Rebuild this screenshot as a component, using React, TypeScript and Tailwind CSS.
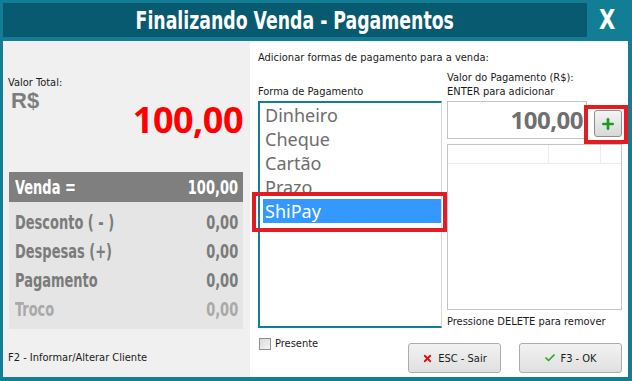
import { Check, Plus, X } from "lucide-react";

const cond = "font-['DejaVu_Sans_Condensed',sans-serif] font-bold";
const ui = "font-['DejaVu_Sans_Condensed',Tahoma,sans-serif] text-[11px] leading-[13px]";

const formas = ["Dinheiro", "Cheque", "Cartão", "Prazo", "ShiPay"];

const resumo = [
  { label: "Desconto ( - )", value: "0,00", tone: "text-[#7b7b7b]" },
  { label: "Despesas (+)", value: "0,00", tone: "text-[#7b7b7b]" },
  { label: "Pagamento", value: "0,00", tone: "text-[#7b7b7b]" },
  { label: "Troco", value: "0,00", tone: "text-[#a9a9a9]" }
];

function SummaryRow({ label, value, tone }: { label: string; value: string; tone: string }) {
  return (
    <div className={`flex h-[29px] items-center justify-between pl-[6px] pr-[5px] text-[19px] leading-[29px] ${tone} ${cond}`}>
      <span className="inline-block origin-left scale-x-[0.76]">{label}</span>
      <span className="inline-block origin-right scale-x-[0.76]">{value}</span>
    </div>
  );
}

export default function App() {
  return (
    <div className="relative flex h-[381px] w-[632px] flex-col bg-[#127e96] pb-[4px] pl-[3px] pr-[4px] pt-[3px]">
      {/* title */}
      <div className="flex h-[38px] items-start">
        <div className="flex h-[34px] w-[584px] items-center justify-center bg-[#075a70]">
          <span className={`inline-block scale-x-[0.77] text-[25px] leading-none text-white ${cond}`}>
            Finalizando Venda - Pagamentos
          </span>
        </div>
        <div className="flex h-[34px] flex-1 items-center justify-center">
          <span className={`inline-block scale-x-[0.9] text-[26px] leading-none text-white ${cond}`}>X</span>
        </div>
      </div>

      <div className="flex h-[336px]">
        {/* left panel */}
        <div className="flex w-[247px] flex-col bg-[#f0f0f0]">
          <div className={`ml-[5px] mt-[35px] text-[#1a1a1a] ${ui}`}>Valor Total:</div>
          <div className="ml-[8px] mt-[3px] font-['Liberation_Sans',Arial,sans-serif] text-[22px] font-bold leading-[18px] text-[#7d7d7d]">
            R$
          </div>
          <div className="-mt-[2px] pr-[7px] text-right font-['Open_Sans',sans-serif] text-[36px] font-bold leading-[24px] tracking-[-0.5px] text-[#ff0000]">
            100,00
          </div>
          <div className="ml-[6px] mt-[40px] w-[234px] bg-[#e5e5e5] pb-[5px]">
            <div className={`flex h-[30px] items-center justify-between bg-[#7f7f7f] pl-[6px] pr-[5px] text-[19px] leading-[30px] text-white ${cond}`}>
              <span className="inline-block origin-left scale-x-[0.76]">Venda =</span>
              <span className="inline-block origin-right scale-x-[0.76]">100,00</span>
            </div>
            <div className="pt-[6px]">
              {resumo.map((r) => (
                <SummaryRow key={r.label} {...r} />
              ))}
            </div>
          </div>
          <div className={`ml-[5px] mt-[22px] text-[#1a1a1a] ${ui}`}>F2 - Informar/Alterar Cliente</div>
        </div>

        {/* right panel */}
        <div className="flex flex-1 flex-col bg-white pl-[8px] pr-[6px] pt-[10px]">
          <div className={`text-[#1a1a1a] ${ui}`}>Adicionar formas de pagamento para a venda:</div>
          <div className="flex h-[264px] gap-[5px]">
            <div className="flex w-[184px] flex-col">
              <div className={`mt-[21px] text-[#1a1a1a] ${ui}`}>Forma de Pagamento</div>
              <div className="mt-[3px] h-[227px] border-b-2 border-l-2 border-r border-t-2 border-b-[#127e96] border-l-[#127e96] border-r-[#d9d9d9] border-t-[#127e96] pl-[3px] font-['Noto_Sans',sans-serif] text-[18px] leading-[24px] text-[#6d6d6d]">
                {formas.map((f) => (
                  <div
                    key={f}
                    className={f === "ShiPay" ? "h-[24px] bg-[#3399ff] pl-[2px] text-white" : "h-[24px] pl-[2px]"}
                  >
                    {f}
                  </div>
                ))}
              </div>
            </div>

            <div className="flex w-[175px] flex-col">
              <div className={`mt-[7px] text-[#1a1a1a] ${ui} leading-[14px]`}>
                Valor do Pagamento (R$):
                <br />
                ENTER para adicionar
              </div>
              <div className="mt-[2px] flex items-start">
                <div className="flex h-[38px] w-[140px] items-center justify-end border border-[#c4c4c4] pr-[3px] font-['Open_Sans',sans-serif] text-[24px] font-bold tracking-[-0.5px] text-[#6f6f6f]">
                  100,00
                </div>
                <button
                  type="button"
                  className="ml-[7px] mt-[9px] flex h-[27px] w-[28px] items-center justify-center rounded-[3px] border border-[#8e8e8e] bg-gradient-to-b from-[#f4f4f4] to-[#d8d8d8]"
                >
                  <Plus className="h-[16px] w-[16px] text-[#1d9a22]" strokeWidth={4} />
                </button>
              </div>
              <div className="mt-[5px] flex h-[169px] flex-col border border-[#c4c4c4]">
                <div className="flex h-[19px] border-b border-[#ececec]">
                  <div className="w-[101px] border-r border-[#ececec]" />
                  <div className="w-[52px] border-r border-[#ececec]" />
                </div>
              </div>
              <div className={`mt-[5px] whitespace-nowrap text-[#1a1a1a] ${ui}`}>Pressione DELETE para remover</div>
            </div>
          </div>

          <div className="flex items-start">
            <label className={`ml-[1px] mt-[9px] flex items-center gap-[4px] text-[#1a1a1a] ${ui}`}>
              <span className="h-[12px] w-[12px] border border-[#8f8f8f] bg-gradient-to-br from-[#dcdcdc] to-[#f4f4f4]" />
              Presente
            </label>
            <div className="ml-auto mt-[15px] flex gap-[18px]">
              <button
                type="button"
                className={`flex h-[30px] w-[93px] items-center justify-center gap-[5px] rounded-[3px] border border-[#acacac] bg-gradient-to-b from-[#f2f2f2] to-[#e0e0e0] text-[#1a1a1a] ${ui}`}
              >
                <X className="h-[11px] w-[11px] text-[#e01010]" strokeWidth={4} />
                ESC - Sair
              </button>
              <button
                type="button"
                className={`flex h-[30px] w-[103px] items-center justify-center gap-[4px] rounded-[3px] border border-[#acacac] bg-gradient-to-b from-[#f2f2f2] to-[#e0e0e0] text-[#1a1a1a] ${ui}`}
              >
                <Check className="h-[12px] w-[12px] text-[#2aa62a]" strokeWidth={3.5} />
                F3 - OK
              </button>
            </div>
          </div>
        </div>
      </div>

      {/* highlight marks */}
      <div className="pointer-events-none absolute left-[252px] top-[192px] h-[40px] w-[195px] border-4 border-[#e31b23]" />
      <div className="pointer-events-none absolute left-[584px] top-[105px] h-[39px] w-[44px] border-4 border-[#e31b23]" />
    </div>
  );
}
